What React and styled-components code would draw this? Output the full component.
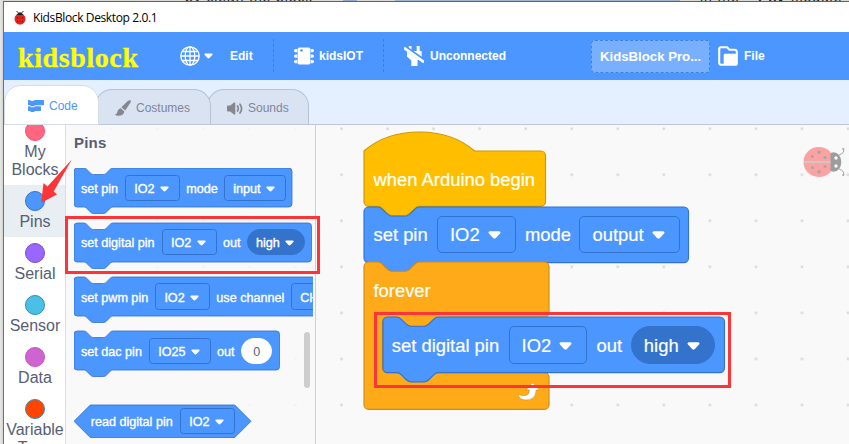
import React from "react";
import styled, { createGlobalStyle } from "styled-components";

const Global = createGlobalStyle`
  *, *::before, *::after { box-sizing: border-box; }
  body { margin: 0; overflow: hidden; font-family: "Liberation Sans", Arial, sans-serif; }
  svg { display: block; flex: none; }
`;

const BLUE = { fill: "#4c97ff", stroke: "#3373cc" };
const YELLOW = { fill: "#ffbf00", stroke: "#cc9900" };
const ORANGE = { fill: "#ffab19", stroke: "#cf8b17" };

/* ---------- window frame ---------- */

const Desktop = styled.div`
  width: 849px;
  height: 444px;
  padding: 1px 0 0 3px;
  overflow: hidden;
  position: relative;
  background: linear-gradient(
    90deg,
    #d9d9d6 0 343px, #8fa9cf 343px 357px, #d9d9d6 357px 395px, #9fb4d4 395px 680px, #d9d9d6 680px
  );
`;

const BackText = styled.span`
  position: absolute;
  top: -10px;
  left: ${(p) => p.$x}px;
  font: ${(p) => (p.$bold ? 700 : 400)} 14px/15px "Liberation Sans", sans-serif;
  letter-spacing: 0.9px;
  color: #222;
  white-space: nowrap;
`;

const Window = styled.div`
  position: relative;
  width: 846px;
  height: 443px;
  border-left: 1px solid #707070;
  border-top: 1px solid #5b6472;
  background: #fff;
  display: flex;
  flex-direction: column;
`;

const EdgeStrip = styled.div`
  position: absolute;
  left: 0;
  top: 0;
  width: 3px;
  height: 444px;
  background: linear-gradient(90deg, #e8e8e6, #d4d4d2);
`;

const TitleBar = styled.div`
  height: 30px;
  flex: none;
  display: flex;
  align-items: center;
  gap: 7px;
  padding-left: 10px;
  font: 12px "Open Sans", "Noto Sans", sans-serif;
  color: #000;
`;

const TitleText = styled.span`
  letter-spacing: -0.38px;
`;

/* ---------- menu bar ---------- */

const MenuBar = styled.div`
  height: 48px;
  flex: none;
  display: flex;
  align-items: center;
  background: #4c97ff;
  color: #fff;
  font-size: 12px;
  font-weight: 700;
  white-space: nowrap;
`;

const Logo = styled.div`
  width: 163px;
  padding: 4px 0 0 14px;
  font: 700 28px/40px "Liberation Serif", serif;
  letter-spacing: 0.6px;
  color: #ff0;
  -webkit-text-stroke: 0.3px #ff0;
`;

const MenuItem = styled.div`
  display: flex;
  align-items: center;
  gap: ${(p) => p.$gap}px;
  width: ${(p) => p.$w}px;
  padding-left: ${(p) => p.$pl || 0}px;
  flex: none;
`;

const Divider = styled.div`
  width: 1px;
  height: 34px;
  flex: none;
  background: repeating-linear-gradient(180deg, #3d7fdc 0 3px, transparent 3px 5px);
`;

const ProjectName = styled.div`
  width: 119px;
  height: 33px;
  margin-right: 8px;
  flex: none;
  border: 1px dashed #3f82de;
  border-radius: 4px;
  background: #78b0ff;
  padding-left: 8px;
  font-size: 13.2px;
  line-height: 31px;
`;

/* ---------- tabs ---------- */

const TabBar = styled.div`
  height: 45px;
  flex: none;
  display: flex;
  align-items: flex-end;
  background: #e4f0ff;
  border-bottom: 1px solid #bcc8da;
`;

const Tab = styled.div`
  position: relative;
  z-index: ${(p) => (p.$active ? 3 : p.$z)};
  width: ${(p) => p.$w}px;
  height: ${(p) => (p.$active ? 40 : 35)}px;
  margin-left: ${(p) => (p.$active ? 0 : -4)}px;
  margin-bottom: ${(p) => (p.$active ? -1 : 0)}px;
  padding: ${(p) => (p.$active ? "1px" : "2px")} 0 0 ${(p) => p.$pl}px;
  display: flex;
  align-items: center;
  gap: ${(p) => p.$gap}px;
  border: 1px solid ${(p) => (p.$active ? "#d5dce6" : "#b7c2d4")};
  border-bottom: ${(p) => (p.$active ? "1px solid #d5dce6" : "none")};
  border-radius: 17px 17px 0 0;
  background: ${(p) => (p.$active ? "#fff" : "#d9e3f2")};
  color: ${(p) => (p.$active ? "#4c97ff" : "#7f8698")};
  font-size: 12px;
`;

/* ---------- main area ---------- */

const Main = styled.div`
  flex: 1;
  min-height: 0;
  display: flex;
`;

const Categories = styled.div`
  width: 62px;
  flex: none;
  overflow: hidden;
  border-right: 1px solid #dcdcdc;
  background: #fff;
`;

const CategoryList = styled.div`
  margin-top: -10px;
`;

const Category = styled.div`
  display: flex;
  flex-direction: column;
  align-items: center;
  padding: 6px 0 0 1px;
  height: ${(p) => (p.$tall ? 70 : 52)}px;
  background: ${(p) => (p.$active ? "#e9eef2" : "transparent")};
  color: #575e75;
  font-size: 16px;
  line-height: 18px;
  text-align: center;
  white-space: pre-line;
`;

const Bubble = styled.div`
  width: 20px;
  height: 20px;
  flex: none;
  margin-bottom: 2px;
  border-radius: 50%;
  border: 1px solid ${(p) => p.$ring};
  background: ${(p) => p.$fill};
`;

const dots = (color, x, y) => `
  background-color: #f9f9f9;
  background-image: radial-gradient(circle, ${color} 0 1.1px, transparent 1.6px);
  background-size: 46.05px 46.05px;
  background-position: ${x}px ${y}px;
`;

const Flyout = styled.div`
  position: relative;
  width: 250px;
  flex: none;
  padding: 9px 0 0 8px;
  overflow: hidden;
  border-right: 1px solid #cfcfcf;
  ${dots("#f3f3f3", 22.2, -19.3)}
`;

const FlyoutTitle = styled.div`
  height: 34.3px;
  line-height: 18px;
  font-size: 15px;
  font-weight: 700;
  letter-spacing: 0.2px;
  color: #575e75;
`;

const BlockList = styled.div`
  display: flex;
  flex-direction: column;
  align-items: flex-start;
  gap: 15.4px;
  width: 239px;
  height: 290px;
  padding-left: 0.3px;
  overflow: hidden;
`;

const ScrollThumb = styled.div`
  position: absolute;
  right: 5px;
  top: 207px;
  width: 6px;
  height: 56px;
  border-radius: 3px;
  background: #cecdce;
`;

const Workspace = styled.div`
  position: relative;
  flex: 1;
  ${dots("#dadada", 2.5, -19.3)}
`;

const Script = styled.div`
  position: absolute;
  left: 48.4px;
  top: 26.3px;
  display: flex;
  flex-direction: column;
  align-items: flex-start;
`;

const Mascot = styled.div`
  position: absolute;
  left: 487px;
  top: 21px;
  opacity: 0.5;
`;

/* ---------- blocks ---------- */

const BlockBox = styled.div`
  position: relative;
  flex: none;
  width: ${(p) => p.$w}px;
  height: ${(p) => p.$h}px;
  margin-top: ${(p) => p.$mt || 0}px;
`;

const BlockShape = styled.svg`
  position: absolute;
  left: 0;
  top: 0;
  overflow: visible;
`;

const BlockRow = styled.div`
  position: relative;
  display: flex;
  align-items: center;
  height: ${(p) => p.$h}px;
  padding-left: ${(p) => p.$pl}px;
  color: #fff;
  font-size: ${(p) => (p.$big ? 18.4 : 12.6)}px;
  -webkit-text-stroke: ${(p) => (p.$big ? 0.2 : 0.35)}px #fff;
  white-space: nowrap;
`;

const Label = styled.span`
  flex: none;
  width: ${(p) => p.$w}px;
  padding-top: 2px;
`;

const Field = styled.span`
  flex: none;
  display: flex;
  align-items: center;
  justify-content: space-between;
  width: ${(p) => p.$w}px;
  height: ${(p) => (p.$big ? 37.5 : 26.4)}px;
  margin-right: ${(p) => (p.$big ? 9.3 : 6.4)}px;
  padding: 2px ${(p) => (p.$big ? 14 : 10)}px 0 ${(p) => (p.$big ? 12 : 8)}px;
  border: 1px solid ${(p) => (p.$plain ? "#fff" : "#3373cc")};
  border-radius: ${(p) => (p.$round ? 20 : p.$big ? 5 : 3.5)}px;
  background: ${(p) => (p.$plain ? "#fff" : p.$round ? "#3373cc" : "transparent")};
  ${(p) => p.$plain && "color: #575e75; padding: 2px 0 0; justify-content: center; -webkit-text-stroke: 0;"}
`;

const NestedBlock = styled.div`
  position: absolute;
  left: 18.3px;
  top: 55.2px;
`;

const LoopMark = styled.svg`
  position: absolute;
  right: 9.500px;
  bottom: 8.500px;
`;

const Caret = ({ big }) => (
  <svg width={big ? 13 : 9} height={big ? 8 : 6} viewBox="0 0 13 8">
    <path d="M1.8 0.3H11.2Q13.3 0.9 12 2.6L7.9 7Q6.5 8.2 5.1 7L1 2.6Q-.3 .9 1.8.3Z" fill="#fff" />
  </svg>
);

const NOTCH_R = "c2 0 3 1 4 2l4 4c1 1 2 2 4 2h12c2 0 3-1 4-2l4-4c1-1 2-2 4-2";
const NOTCH_L = "c-2 0-3 1-4 2l-4 4c-1 1-2 2-4 2h-12c-2 0-3-1-4-2l-4-4c-1-1-2-2-4-2";

function outline(kind, w, h) {
  const right = `H${w - 4}a4 4 0 0 1 4 4V${h - 4}a4 4 0 0 1-4 4`;
  if (kind === "hat") return `M0 0c25-22 71-22 96 0${right}H48${NOTCH_L}H4a4 4 0 0 1-4-4z`;
  if (kind === "hex") return `M${h / 2} 0H${w - h / 2}L${w} ${h / 2}L${w - h / 2} ${h}H${h / 2}L0 ${h / 2}z`;
  if (kind === "loop")
    return `M0 4a4 4 0 0 1 4-4H12${NOTCH_R}H${w - 4}a4 4 0 0 1 4 4V44a4 4 0 0 1-4 4H64${NOTCH_L}H20a4 4 0 0 0-4 4V92a4 4 0 0 0 4 4H${w - 4}a4 4 0 0 1 4 4V${h - 4}a4 4 0 0 1-4 4H4a4 4 0 0 1-4-4z`;
  return `M0 4a4 4 0 0 1 4-4H12${NOTCH_R}${right}H48${NOTCH_L}H4a4 4 0 0 1-4-4z`;
}

function Block({ kind = "stack", w, h, big, tone = BLUE, mt, pl, rowH, children, extra }) {
  const s = big ? 1.152 : 0.815;
  return (
    <BlockBox $w={w} $h={h} $mt={mt}>
      <BlockShape width={w} height={h}>
        <path
          transform={`scale(${s})`}
          d={outline(kind, w / s, h / s)}
          fill={tone.fill}
          stroke={tone.stroke}
          strokeWidth="1"
        />
      </BlockShape>
      <BlockRow $h={rowH || h} $pl={pl ?? (big ? 9.1 : 6.7)} $big={big}>
        {children}
      </BlockRow>
      {extra}
    </BlockBox>
  );
}

const Drop = ({ w, big, round, children }) => (
  <Field $w={w} $big={big} $round={round}>
    {children}
    <Caret big={big} />
  </Field>
);

const Highlight = styled.div`
  position: absolute;
  left: ${(p) => p.$x}px;
  top: ${(p) => p.$y}px;
  width: ${(p) => p.$w}px;
  height: ${(p) => p.$h}px;
  border: 3px solid #fb3538;
`;

const Pointer = styled.svg`
  position: absolute;
  left: 37px;
  top: 157px;
`;

/* ---------- icons ---------- */

const BugIcon = () => (
  <svg width="12" height="15" viewBox="0 0 12 15">
    <path d="M2.5 1l2 2M9.500 1l-2 2" stroke="#333" strokeWidth="1" />
    <ellipse cx="6" cy="9" rx="5.5" ry="5.6" fill="#e32620" />
    <path d="M2.500 5Q6-.5 9.500 5Z" fill="#222" />
    <path d="M6 5v9.500" stroke="#b5201b" strokeWidth=".6" />
    <g fill="#6a1412">
      <circle cx="3.500" cy="8" r=".8" /><circle cx="8.500" cy="8" r=".8" />
      <circle cx="3.700" cy="11.500" r=".8" /><circle cx="8.300" cy="11.500" r=".8" />
    </g>
  </svg>
);

const GlobeIcon = () => (
  <svg width="20" height="20" viewBox="0 0 20 20" fill="none" stroke="#fff" strokeWidth="1.3">
    <circle cx="10" cy="10" r="9.2" />
    <ellipse cx="10" cy="10" rx="4.800" ry="9.2" />
    <path d="M10 1v18M1 10h18M2.500 5.500h15M2.500 14.500h15" />
  </svg>
);

const ChipIcon = () => (
  <svg width="20" height="20" viewBox="0 0 20 20" fill="#fff">
    <rect x="0" y="3" width="20" height="3.200" rx="1.600" />
    <rect x="0" y="8.500" width="20" height="3.200" rx="1.600" />
    <rect x="0" y="14" width="20" height="3.200" rx="1.600" />
    <rect x="3.400" y="1.200" width="13.200" height="17.600" rx="2.200" stroke="#4c97ff" strokeWidth=".5" />
    <circle cx="7.500" cy="4.500" r="1.300" fill="#4c97ff" />
  </svg>
);

const PlugIcon = () => (
  <svg width="20" height="20" viewBox="0 0 20 20" fill="#fff">
    <path d="M4.800 0h2.700v5h5.200V0h3v5h2V10.500L13.500 14.500V20H7.300V14.500L3 10.500V5H4.800Z" />
    <path d="M0 .9L21 15.600" stroke="#4c97ff" strokeWidth="4.200" />
    <path d="M0 1.800L20 16.200" stroke="#fff" strokeWidth="2.700" />
  </svg>
);

const FolderIcon = () => (
  <svg width="20" height="20" viewBox="0 0 20 20">
    <path d="M1.200 16.500V3Q1.200 1.200 3 1.200H9L11.500 3.700H16.500Q18.800 3.700 18.800 6V17Q18.800 18.800 17 18.800H3.500Q1.200 18.800 1.200 16.500Z" fill="none" stroke="#fff" strokeWidth="2.100" />
    <path d="M5.500 9Q5.500 7.500 7 7.500H19V19H5.500Z" fill="#fff" />
    <path d="M4.700 17V9Q4.700 6.900 6.700 6.900H17.500" fill="none" stroke="#4c97ff" strokeWidth="1.200" />
  </svg>
);

const CodeIcon = () => (
  <svg width="16" height="12" viewBox="0 0 16 12" fill="#4c97ff">
    <path d="M0 .6Q0 0 .6 0H2l1 1h2.500l1-1h9Q16 0 16 .6V4.500Q16 5.200 15.400 5.200H7L6 6.200H3L2 5.200H.6Q0 5.200 0 4.600Z" />
    <path d="M0 7Q0 6.300.6 6.300H2l1 1H6l1-1h5.200Q13 6.300 13 7v3.300Q13 11 12.300 11H7l-1 1H3l-1-1H.6Q0 11 0 10.300Z" />
  </svg>
);

const BrushIcon = () => (
  <svg width="16" height="16" viewBox="0 0 16 16" fill="#85878c">
    <path d="M15.300.3Q16.200 1 15.500 2.500L10.200 10.600L6.400 7.300L13 .8Q14.500-.2 15.300.3Z" />
    <path d="M5.800 8.200L9.300 11.400Q8.700 15.600 3.200 15.800Q1 15.800 0 14.600Q2 14.200 2.400 12Q3 8.600 5.800 8.200Z" />
  </svg>
);

const SpeakerIcon = () => (
  <svg width="16" height="13" viewBox="0 0 16 13">
    <path d="M0 4.500Q0 3.500 1 3.500H3.300L7 .5Q8.300 0 8.300 1.500v10Q8.300 13 7 12.500L3.300 9.500H1Q0 9.500 0 8.500Z" fill="#85878c" />
    <path d="M10.500 4Q12 6.500 10.500 9M13 2.200Q16.200 6.500 13 11" fill="none" stroke="#85878c" strokeWidth="1.700" strokeLinecap="round" />
  </svg>
);

const LoopIcon = () => (
  <LoopMark width="22" height="19" viewBox="0 0 22 19">
    <path
      d="M14.500 .8L21.500 8H18.200Q18 13.500 14.800 16.200Q12 18.300 7 18Q1.500 17.400 .4 13.400Q.4 12.400 1.700 12.700Q5.500 14.200 8.300 13.200Q11.300 12 11.500 8H8Z"
      fill="#fff" stroke="#cf8b17" strokeWidth=".6" strokeLinejoin="round"
    />
  </LoopMark>
);

const LadybugIcon = () => (
  <svg width="44" height="32" viewBox="0 0 44 32">
    <path d="M36 9Q42 7 40.500 3M36 23Q42 25 40.500 29" fill="none" stroke="#555" strokeWidth="1" />
    <circle cx="40.300" cy="3" r="1.100" fill="#555" />
    <circle cx="40.300" cy="29" r="1.100" fill="#555" />
    <ellipse cx="30.500" cy="16" rx="7.800" ry="9.800" fill="#444" />
    <path d="M27.500 6Q23 1 15.500 1A15 15 0 0 0 15.500 31Q23 31 27.500 26Z" fill="#ff4d4d" />
    <path d="M1 16H27.500" stroke="#a99" strokeWidth="1.800" />
    <g fill="#555">
      <circle cx="16" cy="6.300" r="1.700" /><circle cx="16" cy="25.700" r="1.700" />
      <circle cx="9.500" cy="10.500" r="1.500" /><circle cx="9.500" cy="21.500" r="1.500" />
      <circle cx="22" cy="11.500" r="1.500" /><circle cx="22" cy="20.500" r="1.500" />
    </g>
    <circle cx="33" cy="12" r="1.700" fill="#fff" />
    <circle cx="33" cy="20" r="1.700" fill="#fff" />
  </svg>
);

const CATEGORIES = [
  { name: "My\nBlocks", fill: "#ff6680", ring: "#ff4d6a", tall: true },
  { name: "Pins", fill: "#4c97ff", ring: "#3373cc", active: true },
  { name: "Serial", fill: "#9966ff", ring: "#774dcb" },
  { name: "Sensor", fill: "#4cbfe6", ring: "#2e8eb8" },
  { name: "Data", fill: "#cf63cf", ring: "#c94fc9" },
  { name: "Variable\nType", fill: "#ff4500", ring: "#2e8eb8", tall: true },
];

export default function App() {
  return (
    <Desktop>
      <Global />
      <BackText $x={185}>by clean the block</BackText>
      <BackText $x={700}>in the</BackText>
      <BackText $x={750} $bold>“PIN”</BackText>
      <BackText $x={791}>module</BackText>
      <EdgeStrip />
      <Window>
        <TitleBar>
          <BugIcon />
          <TitleText>KidsBlock Desktop 2.0.1</TitleText>
        </TitleBar>

        <MenuBar>
          <Logo>kidsblock</Logo>
          <MenuItem $w={106} $gap={4} $pl={13}>
            <GlobeIcon />
            <Caret />
            <MenuItem $w={30} $pl={13}>Edit</MenuItem>
          </MenuItem>
          <Divider />
          <MenuItem $w={109} $gap={5} $pl={20}>
            <ChipIcon />
            kidsIOT
          </MenuItem>
          <Divider />
          <MenuItem $w={207} $gap={6} $pl={20}>
            <PlugIcon />
            Unconnected
          </MenuItem>
          <ProjectName>KidsBlock Pro...</ProjectName>
          <MenuItem $w={60} $gap={6}>
            <FolderIcon />
            File
          </MenuItem>
        </MenuBar>

        <TabBar>
          <Tab $active $w={95} $pl={23} $gap={5}><CodeIcon />Code</Tab>
          <Tab $z={2} $w={116} $pl={19} $gap={5}><BrushIcon />Costumes</Tab>
          <Tab $z={1} $w={102} $pl={19} $gap={5}><SpeakerIcon />Sounds</Tab>
        </TabBar>

        <Main>
          <Categories>
            <CategoryList>
              {CATEGORIES.map((c) => (
                <Category key={c.name} $tall={c.tall} $active={c.active}>
                  <Bubble $fill={c.fill} $ring={c.ring} />
                  {c.name}
                </Category>
              ))}
            </CategoryList>
          </Categories>

          <Flyout>
            <FlyoutTitle>Pins</FlyoutTitle>
            <BlockList>
              <Block w={218} h={39}>
                <Label $w={44.3}>set pin</Label>
                <Drop w={54.6}>IO2</Drop>
                <Label $w={38}>mode</Label>
                <Drop w={62}>input</Drop>
              </Block>
              <Block w={237.5} h={39}>
                <Label $w={81}>set digital pin</Label>
                <Drop w={54.6}>IO2</Drop>
                <Label $w={24}>out</Label>
                <Drop w={58} round>high</Drop>
              </Block>
              <Block w={300} h={39}>
                <Label $w={74.400}>set pwm pin</Label>
                <Drop w={54.6}>IO2</Drop>
                <Label $w={74.800}>use channel</Label>
                <Drop w={62}>CH0</Drop>
              </Block>
              <Block w={205.5} h={39}>
                <Label $w={68.300}>set dac pin</Label>
                <Drop w={61.300}>IO25</Drop>
                <Label $w={24}>out</Label>
                <Field $w={31.500} $round $plain>0</Field>
              </Block>
              <Block kind="hex" w={177} h={32.5} mt={19.2} pl={16.5}>
                <Label $w={89.500}>read digital pin</Label>
                <Drop w={54.6}>IO2</Drop>
              </Block>
            </BlockList>
            <ScrollThumb />
          </Flyout>

          <Workspace>
            <Script>
              <Block kind="hat" big w={181.5} h={55.3} tone={YELLOW}>
                <Label>when Arduino begin</Label>
              </Block>
              <Block big w={324.500} h={55.600}>
                <Label $w={63.500}>set pin</Label>
                <Drop big w={78.700}>IO2</Drop>
                <Label $w={54.500}>mode</Label>
                <Drop big w={100.500}>output</Drop>
              </Block>
              <Block
                kind="loop" big w={185} h={147.300} rowH={55.300} tone={ORANGE}
                extra={
                  <>
                    <LoopIcon />
                    <NestedBlock>
                      <Block big w={341.500} h={55.600}>
                        <Label $w={116.800}>set digital pin</Label>
                        <Drop big w={78.700}>IO2</Drop>
                        <Label $w={34.300}>out</Label>
                        <Drop big round w={84.300}>high</Drop>
                      </Block>
                    </NestedBlock>
                  </>
                }
              >
                <Label>forever</Label>
              </Block>
            </Script>
            <Mascot><LadybugIcon /></Mascot>
          </Workspace>
        </Main>
      </Window>
      <Highlight $x={65} $y={216} $w={255} $h={58} />
      <Highlight $x={374} $y={312} $w={357} $h={76} />
      <Pointer width="36" height="48" viewBox="0 0 36 48">
        <path d="M34.800 2.500L16.700 34.500L20 37.500L4.200 45.800L6.500 26L10.500 29.500Z" fill="#fb3538" />
      </Pointer>
    </Desktop>
  );
}
